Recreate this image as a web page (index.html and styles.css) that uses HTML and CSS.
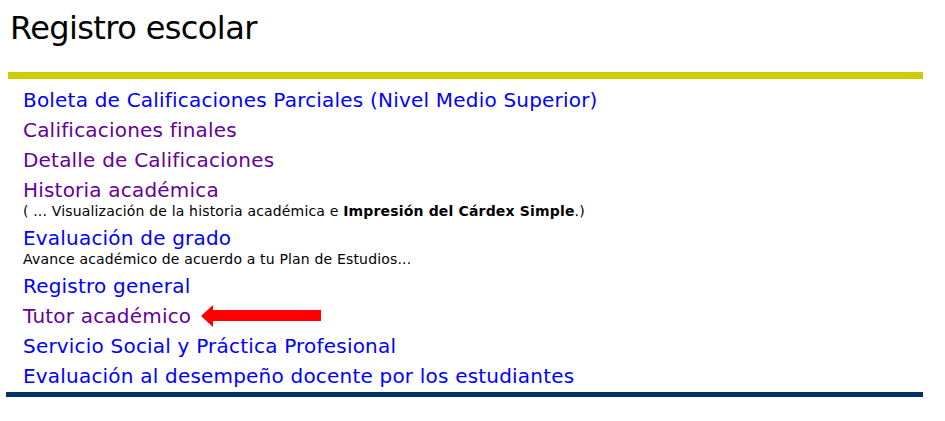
FILE: index.html
```html
<!DOCTYPE html>
<html lang="es">
<head>
<meta charset="utf-8">
<title>Registro escolar</title>
<link rel="stylesheet" href="styles.css">
</head>
<body>
<h1 class="title">Registro escolar</h1>
<div class="panel">
  <ul class="menu">
    <li class="item"><a class="link" href="#">Boleta de Calificaciones Parciales (Nivel Medio Superior)</a></li>
    <li class="item"><a class="link visited" href="#">Calificaciones finales</a></li>
    <li class="item"><a class="link visited" href="#">Detalle de Calificaciones</a></li>
    <li class="item"><a class="link visited" href="#">Historia académica</a>
      <div class="desc">( ... Visualización de la historia académica e <b>Impresión del Cárdex Simple</b>.)</div></li>
    <li class="item"><a class="link" href="#">Evaluación de grado</a>
      <div class="desc">Avance académico de acuerdo a tu Plan de Estudios...</div></li>
    <li class="item"><a class="link" href="#">Registro general</a></li>
    <li class="item row"><a class="link visited" href="#">Tutor académico</a>
      <svg class="arrow" width="120" height="22" viewBox="0 0 120 22"><polygon points="0,11 12,0 12,5 120,5 120,16 12,16 12,22" fill="#ff0000"/></svg></li>
    <li class="item"><a class="link" href="#">Servicio Social y Práctica Profesional</a></li>
    <li class="item"><a class="link" href="#">Evaluación al desempeño docente por los estudiantes</a></li>
  </ul>
</div>
</body>
</html>
```
FILE: styles.css
```css
html, body {
  margin: 0;
  padding: 0;
  background: #ffffff;
}
body {
  padding: 8px 0 0 0;
  font-family: "DejaVu Sans", sans-serif;
  color: #000;
}
.title {
  margin: 0 0 0 10px;
  font-size: 32px;
  font-weight: normal;
  letter-spacing: -0.6px;
  line-height: 40px;
  height: 64px;
}
.panel {
  margin-left: 8px;
  width: 915px;
  border-top: 7px solid #cccc00;
}
.menu {
  list-style: none;
  margin: 0 0 0 -2px;
  padding: 9px 0 4px 17px;
  border-bottom: 5px solid #003366;
}
.item {
  margin-bottom: 6px;
}
.item:last-child {
  margin-bottom: 0;
}
.row {
  display: flex;
  align-items: center;
  gap: 10px;
}
.link {
  display: block;
  font-size: 20px;
  line-height: 24px;
  letter-spacing: 0.2px;
  color: #0000ff;
  text-decoration: none;
}
.link.visited {
  color: #660099;
}
.desc {
  font-size: 14px;
  line-height: 18px;
  letter-spacing: 0.17px;
}
.arrow {
  display: block;
}
```
